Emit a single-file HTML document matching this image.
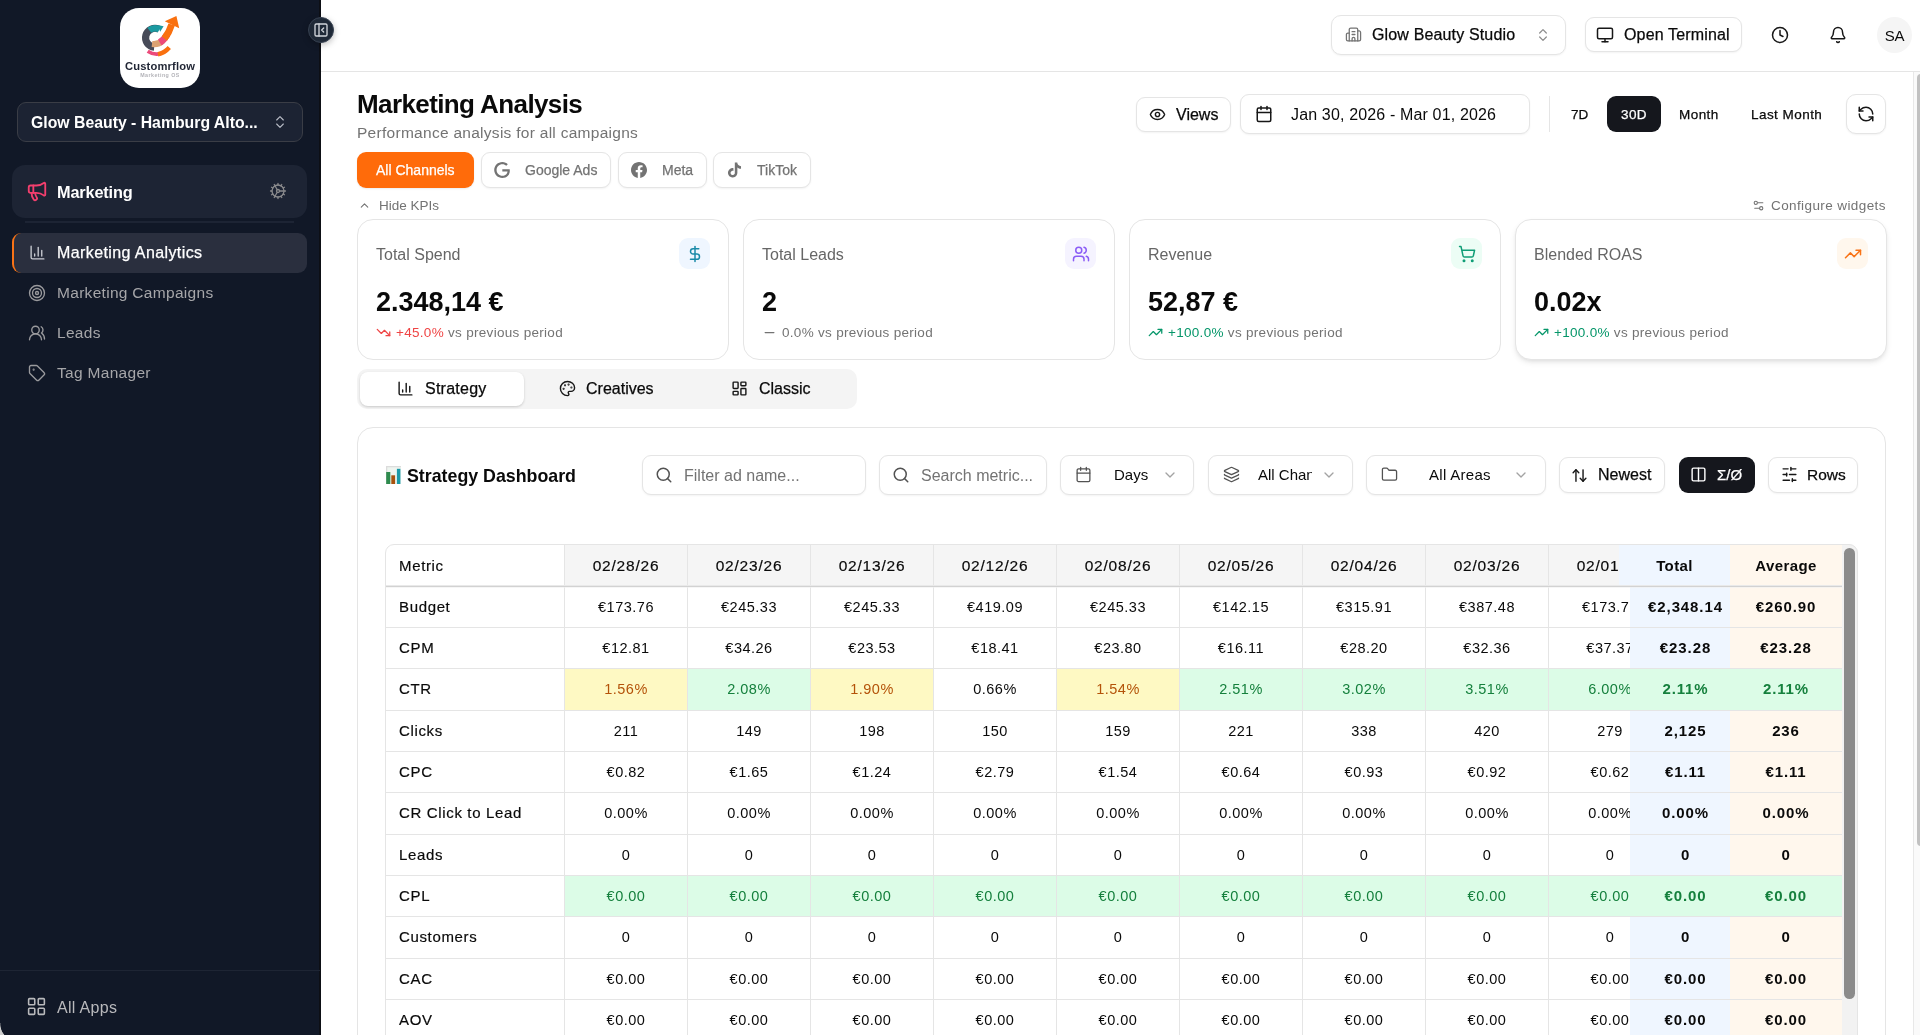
<!DOCTYPE html>
<html lang="en">
<head>
<meta charset="utf-8">
<title>Marketing Analysis</title>
<style>
*{box-sizing:border-box;margin:0;padding:0}
html,body{width:1920px;height:1035px;overflow:hidden;background:#fff}
body{font-family:"Liberation Sans",sans-serif;color:#0a0a0a;position:relative;-webkit-font-smoothing:antialiased;will-change:transform}
.abs{position:absolute}
svg{display:block}
.ic{position:absolute;fill:none;stroke:currentColor;stroke-width:2;stroke-linecap:round;stroke-linejoin:round}
.t{position:absolute;white-space:nowrap;line-height:1}
.md{-webkit-text-stroke:.25px currentColor}

/* ---------- sidebar ---------- */
#sb{position:absolute;left:0;top:0;width:321px;height:1035px;background:#111827;border-right:2px solid #0d0f15}
#logo{position:absolute;left:120px;top:8px;width:80px;height:80px;border-radius:19px;background:#fff;overflow:hidden}
#collapse{position:absolute;left:308px;top:17px;width:26px;height:26px;border-radius:50%;background:#1f2937;border:1px solid #374151;box-shadow:0 2px 6px rgba(0,0,0,.25);color:#d1d5db}
#org{position:absolute;left:17px;top:102px;width:286px;height:40px;border-radius:9px;background:#1c2333;border:1px solid #3a3d46;color:#fff}
#mk{position:absolute;left:12px;top:165px;width:295px;height:53px;border-radius:13px;background:#1d2434}
#sep{position:absolute;left:25px;top:221px;width:269px;height:2px;background:#1d2434}
#act{position:absolute;left:12px;top:233px;width:295px;height:40px;border-radius:9px;background:#2a2f3e;border-left:2px solid #f97316}
.nav{color:#a6a6a9;font-size:15.5px;font-weight:400;letter-spacing:.3px}
#sbfoot{position:absolute;left:0;top:970px;width:320px;height:1px;background:#1e2534}

/* ---------- header ---------- */
#hdr{position:absolute;left:321px;top:0;width:1599px;height:72px;border-bottom:1px solid #e5e5e5;background:#fff}
.btn{position:absolute;border:1px solid #e5e5e5;border-radius:8px;background:#fff;box-shadow:0 1px 2px rgba(0,0,0,.05)}

/* ---------- table ---------- */
#tbl{position:absolute;left:385px;top:544px;width:1473px;height:491px;overflow:hidden;border-top-left-radius:9px;border-top-right-radius:9px;background:#fff;font-size:15px}
#tblborder{position:absolute;left:385px;top:544px;width:1473px;height:500px;border:1px solid #e5e5e5;border-radius:9px;pointer-events:none}
#tbl .hd,#tbl .c{position:absolute;text-align:center;white-space:nowrap;overflow:hidden;line-height:41px;color:#0a0a0a;border-right:1px solid #e5e5e5}
#tbl .hd{background:#f5f5f5;line-height:43px;font-size:15.5px;letter-spacing:.78px;-webkit-text-stroke:.18px currentColor}
#tbl .c{border-bottom:1px solid #e5e5e5;line-height:40px;font-size:14.5px;letter-spacing:.5px}
#tbl .m{text-align:left;padding-left:14px;font-size:15px;letter-spacing:.65px;-webkit-text-stroke:.18px currentColor}
#tbl .y{background:#fef9c3;color:#b45309}
#tbl .g{background:#dcfce7;color:#15803d}
#tbl .s{font-weight:700;border-right:0;font-size:15px;letter-spacing:.9px}
#tbl .hd.s{letter-spacing:.38px;-webkit-text-stroke:0;font-size:15px}
#tbl .tt{background:#eff6ff}
#tbl .av{background:#fff7ed}
#tbl .tt.g,#tbl .av.g{background:#dcfce7}
#hline{position:absolute;left:0;top:41px;width:1457px;height:3px;background:linear-gradient(to bottom,#e9e9e9 0,#e9e9e9 1px,#d2d2d2 1px,#d2d2d2 2px,rgba(240,240,240,.6) 2px)}
#vtrack{position:absolute;left:1457px;top:0;width:16px;height:491px;background:#f2f2f2}
#vthumb{position:absolute;left:1459px;top:4px;width:11px;height:451px;border-radius:5.500px;background:#8b8b8b}
</style>
</head>
<body>

<!-- ================= SIDEBAR ================= -->
<div id="sb">
  <div id="logo">
    <svg class="abs" style="left:0;top:0" width="80" height="62" viewBox="0 0 80 62">
      <path d="M38.970 21.180 A9.400 9.400 0 1 0 34.180 39.060" fill="none" stroke="#474b58" stroke-width="7.200"/>
      <path d="M29.300 22.300 A9.400 9.400 0 0 1 39.400 21.400" fill="none" stroke="#1b9aa1" stroke-width="6.400"/>
      <path d="M37.500 17 L43.600 18.200 L40.200 23.800 Z" fill="#1b9aa1"/>
      <path d="M32 36 C37 36.600 40.500 35 43 32.500" fill="none" stroke="#dba272" stroke-width="6.200"/>
      <path d="M39.800 34.500 C43 32.500 45.500 29.500 47.300 26.500" fill="none" stroke="#ec4a7a" stroke-width="6.800"/>
      <path d="M44.400 30.600 C47.600 26.500 50 22 51.700 16.500" fill="none" stroke="#f9700f" stroke-width="6.800"/>
      <path d="M56.400 8 L44.800 13.300 L59.200 20.300 Z" fill="#f9700f"/>
      <path d="M27.700 43.200 C34 47.300 41 46.800 46.800 41.800" fill="none" stroke="#ec4a7a" stroke-width="3.600"/>
      <path d="M38 46.200 C42 45.600 45.800 43.500 49.300 39.500" fill="none" stroke="#f9700f" stroke-width="4.400"/>
    </svg>
    <div class="t" style="left:0;width:80px;text-align:center;top:53px;font-size:11.2px;font-weight:700;color:#1f2433;letter-spacing:.15px">Customrflow</div>
    <div class="t" style="left:0;width:80px;text-align:center;top:65px;font-size:5.3px;font-weight:700;color:#b3b3b8;letter-spacing:.45px">Marketing OS</div>
  </div>

  <div id="org">
    <div class="t" id="sb_org" style="left:13px;top:12px;font-size:15.8px;font-weight:700">Glow Beauty - Hamburg Alto...</div>
    <svg class="ic" style="left:254px;top:11px;color:#b8bcc6;stroke-width:1.7" width="16" height="16" viewBox="0 0 24 24"><path d="m7 15 5 5 5-5"/><path d="m7 9 5-5 5 5"/></svg>
  </div>

  <div id="mk">
    <svg class="ic" style="left:14px;top:15px;color:#f43f6e;stroke-width:2" width="22" height="22" viewBox="0 0 24 24"><path d="M11 6a13 13 0 0 0 8.400-2.800A1 1 0 0 1 21 4v12a1 1 0 0 1-1.600.800A13 13 0 0 0 11 14H5a2 2 0 0 1-2-2V8a2 2 0 0 1 2-2z"/><path d="M6 14a12 12 0 0 0 2.400 7.200 2 2 0 0 0 3.200-2.400A8 8 0 0 1 10 14"/><path d="M8 6v8"/></svg>
    <div class="t" id="sb_mk" style="left:45px;top:19px;font-size:16.3px;letter-spacing:-.15px;font-weight:700;color:#fff">Marketing</div>
    <svg class="ic" style="left:257px;top:17px;color:#8b8b8d;stroke-width:1.7" width="18" height="18" viewBox="0 0 24 24"><circle cx="12" cy="12" r="8"/><path d="M12 2v2M12 22v-2M17 20.660l-1-1.730M11 10.270 7 3.340M20.660 17l-1.730-1M3.340 7l1.730 1M14 12h8M2 12h2M20.660 7l-1.730 1M3.340 17l1.730-1M17 3.340l-1 1.730M11 13.730l-4 6.930"/><circle cx="12" cy="12" r="2"/></svg>
  </div>
  <div id="sep"></div>

  <div id="act">
    <svg class="ic" style="left:15px;top:11px;color:#c9ccd3;stroke-width:1.9" width="17" height="17" viewBox="0 0 24 24"><path d="M3 3v16a2 2 0 0 0 2 2h16"/><path d="M18 17V9"/><path d="M13 17V5"/><path d="M8 17v-3"/></svg>
    <div class="t md" id="sb_ma" style="left:43px;top:12px;font-size:16px;letter-spacing:.4px;font-weight:400;color:#fff">Marketing Analytics</div>
  </div>

  <svg class="ic" style="left:28px;top:284px;color:#9a9a9d;stroke-width:1.8" width="18" height="18" viewBox="0 0 24 24"><circle cx="12" cy="12" r="10"/><circle cx="12" cy="12" r="6"/><circle cx="12" cy="12" r="2"/></svg>
  <div class="t nav" id="sb_mc" style="left:57px;top:285px">Marketing Campaigns</div>

  <svg class="ic" style="left:28px;top:324px;color:#9a9a9d;stroke-width:1.8" width="18" height="18" viewBox="0 0 24 24"><path d="M18 21a8 8 0 0 0-16 0"/><circle cx="10" cy="8" r="5"/><path d="M22 20c0-3.370-2-6.500-4-8a5 5 0 0 0-.450-8.300"/></svg>
  <div class="t nav" id="sb_l" style="left:57px;top:325px">Leads</div>

  <svg class="ic" style="left:28px;top:364px;color:#9a9a9d;stroke-width:1.8" width="18" height="18" viewBox="0 0 24 24"><path d="M12.586 2.586A2 2 0 0 0 11.172 2H4a2 2 0 0 0-2 2v7.172a2 2 0 0 0 .586 1.414l8.704 8.704a2.426 2.426 0 0 0 3.420 0l6.580-6.580a2.426 2.426 0 0 0 0-3.420z"/><circle cx="7.500" cy="7.500" r=".5" fill="currentColor"/></svg>
  <div class="t nav" id="sb_tm" style="left:57px;top:365px">Tag Manager</div>

  <div id="sbfoot"></div>
  <svg class="ic" style="left:26px;top:996px;color:#b9b9bc;stroke-width:1.8" width="21" height="21" viewBox="0 0 24 24"><rect width="7" height="7" x="3" y="3" rx="1"/><rect width="7" height="7" x="14" y="3" rx="1"/><rect width="7" height="7" x="14" y="14" rx="1"/><rect width="7" height="7" x="3" y="14" rx="1"/></svg>
  <div class="t nav" id="sb_aa" style="left:57px;top:1000px;color:#b9b9bc;font-size:16px">All Apps</div>
</div>

<!-- ================= HEADER ================= -->
<div id="hdr"></div>
<div id="collapse">
  <svg class="ic" style="left:4px;top:4px;stroke-width:2" width="16" height="16" viewBox="0 0 24 24"><rect width="18" height="18" x="3" y="3" rx="2"/><path d="M9 3v18"/><path d="m16 15-3-3 3-3"/></svg>
</div>

<!--MAIN-->
<!-- ================= TOP BAR ================= -->
<div class="btn" style="left:1331px;top:15px;width:235px;height:40px;border-radius:10px"></div>
<svg class="ic" style="left:1345px;top:26px;color:#737373;stroke-width:1.8" width="17" height="17" viewBox="0 0 24 24"><path d="M10 12h4"/><path d="M10 8h4"/><path d="M14 21v-3a2 2 0 0 0-4 0v3"/><path d="M6 10H4a2 2 0 0 0-2 2v7a2 2 0 0 0 2 2h16a2 2 0 0 0 2-2V9a2 2 0 0 0-2-2h-2"/><path d="M6 21V5a2 2 0 0 1 2-2h8a2 2 0 0 1 2 2v16"/></svg>
<div class="t md" id="h_org" style="left:1372px;top:27px;font-size:16px;letter-spacing:.15px;color:#0a0a0a">Glow Beauty Studio</div>
<svg class="ic" style="left:1535px;top:27px;color:#8a8a8a;stroke-width:1.8" width="16" height="16" viewBox="0 0 24 24"><path d="m7 15 5 5 5-5"/><path d="m7 9 5-5 5 5"/></svg>

<div class="btn" style="left:1585px;top:17px;width:157px;height:35px;border-radius:9px"></div>
<svg class="ic" style="left:1596px;top:26px;color:#171717;stroke-width:2" width="18" height="18" viewBox="0 0 24 24"><rect width="20" height="14" x="2" y="3" rx="2"/><path d="M8 21h8"/><path d="M12 17v4"/></svg>
<div class="t md" id="h_term" style="left:1624px;top:27px;font-size:16px;letter-spacing:.15px;color:#0a0a0a">Open Terminal</div>

<svg class="ic" style="left:1771px;top:26px;color:#171717;stroke-width:2" width="18" height="18" viewBox="0 0 24 24"><circle cx="12" cy="12" r="10"/><path d="M12 6v6l4 2"/></svg>
<svg class="ic" style="left:1829px;top:26px;color:#171717;stroke-width:2" width="18" height="18" viewBox="0 0 24 24"><path d="M10.268 21a2 2 0 0 0 3.464 0"/><path d="M3.262 15.326A1 1 0 0 0 4 17h16a1 1 0 0 0 .74-1.673C19.410 13.956 18 12.499 18 8A6 6 0 0 0 6 8c0 4.499-1.411 5.956-2.738 7.326"/></svg>
<div class="abs" style="left:1877px;top:17px;width:35px;height:36px;border-radius:50%;background:#f5f5f5"></div>
<div class="t" id="h_sa" style="left:1877px;width:35px;text-align:center;top:28px;font-size:15px;letter-spacing:-.3px;color:#0a0a0a">SA</div>

<!-- ================= PAGE HEAD ================= -->
<div class="t" id="ttl" style="left:357px;top:91px;font-size:26px;font-weight:700;letter-spacing:-.6px;color:#0a0a0a">Marketing Analysis</div>
<div class="t" id="sub" style="left:357px;top:125px;font-size:15.5px;letter-spacing:.28px;color:#737373">Performance analysis for all campaigns</div>

<div class="abs" style="left:357px;top:152px;width:117px;height:36px;border-radius:9px;background:#ff6b0a;box-shadow:0 1px 2px rgba(0,0,0,.08)"></div>
<div class="t md" id="c_all" style="left:376px;top:163px;font-size:14px;color:#fff">All Channels</div>

<div class="btn" style="left:481px;top:152px;width:130px;height:36px;border-radius:9px"></div>
<svg class="abs" style="left:494px;top:162px" width="16" height="16" viewBox="0 0 24 24"><path fill="#737373" d="M12.48 10.920v3.280h7.840c-.240 1.840-.853 3.187-1.787 4.133-1.147 1.147-2.933 2.400-6.053 2.400-4.827 0-8.600-3.893-8.600-8.720s3.773-8.720 8.600-8.720c2.600 0 4.507 1.027 5.907 2.347l2.307-2.307C18.747 1.440 16.133 0 12.480 0 5.867 0 .307 5.387.307 12s5.560 12 12.173 12c3.573 0 6.267-1.173 8.373-3.360 2.160-2.160 2.840-5.213 2.840-7.667 0-.760-.053-1.467-.173-2.053H12.480z"/></svg>
<div class="t md" id="c_g" style="left:525px;top:163px;font-size:14px;color:#737373">Google Ads</div>

<div class="btn" style="left:618px;top:152px;width:89px;height:36px;border-radius:9px"></div>
<svg class="abs" style="left:631px;top:162px" width="16" height="16" viewBox="0 0 24 24"><path fill="#737373" d="M24 12.073c0-6.627-5.373-12-12-12s-12 5.373-12 12c0 5.990 4.388 10.954 10.125 11.854v-8.385H7.078v-3.470h3.047V9.430c0-3.007 1.792-4.669 4.533-4.669 1.312 0 2.686.235 2.686.235v2.953H15.830c-1.491 0-1.956.925-1.956 1.874v2.250h3.328l-.532 3.470h-2.796v8.385C19.612 23.027 24 18.062 24 12.073z"/></svg>
<div class="t md" id="c_m" style="left:662px;top:163px;font-size:14px;color:#737373">Meta</div>

<div class="btn" style="left:713px;top:152px;width:98px;height:36px;border-radius:9px"></div>
<svg class="abs" style="left:727px;top:162px" width="15" height="16" viewBox="0 0 24 24"><path fill="#737373" d="M12.525.020c1.310-.020 2.610-.010 3.910-.020.080 1.530.630 3.090 1.750 4.170 1.120 1.110 2.700 1.620 4.240 1.790v4.030c-1.440-.050-2.890-.350-4.200-.970-.570-.260-1.100-.590-1.620-.930-.010 2.920.010 5.840-.020 8.750-.080 1.400-.540 2.790-1.350 3.940-1.310 1.920-3.580 3.170-5.910 3.210-1.430.080-2.860-.310-4.080-1.030-2.020-1.190-3.440-3.370-3.650-5.710-.020-.500-.030-1-.010-1.490.180-1.900 1.120-3.720 2.580-4.960 1.660-1.440 3.980-2.130 6.150-1.720.020 1.480-.040 2.960-.040 4.440-.990-.320-2.150-.230-3.020.370-.630.410-1.110 1.040-1.360 1.750-.210.510-.150 1.070-.140 1.610.240 1.640 1.820 3.020 3.500 2.870 1.120-.010 2.190-.660 2.770-1.610.190-.330.400-.670.410-1.060.100-1.790.060-3.570.070-5.360.010-4.030-.010-8.050.020-12.070z"/></svg>
<div class="t md" id="c_t" style="left:757px;top:163px;font-size:14px;color:#737373">TikTok</div>

<div class="btn" style="left:1136px;top:97px;width:95px;height:35px;border-radius:9px"></div>
<svg class="ic" style="left:1149px;top:106px;color:#171717;stroke-width:2" width="17" height="17" viewBox="0 0 24 24"><path d="M2.062 12.348a1 1 0 0 1 0-.696 10.750 10.750 0 0 1 19.876 0 1 1 0 0 1 0 .696 10.750 10.750 0 0 1-19.876 0"/><circle cx="12" cy="12" r="3"/></svg>
<div class="t md" id="b_views" style="left:1176px;top:107px;font-size:16px;color:#0a0a0a">Views</div>

<div class="btn" style="left:1240px;top:94px;width:290px;height:40px;border-radius:9px"></div>
<svg class="ic" style="left:1255px;top:105px;color:#171717;stroke-width:2" width="18" height="18" viewBox="0 0 24 24"><path d="M8 2v4"/><path d="M16 2v4"/><rect width="18" height="18" x="3" y="4" rx="2"/><path d="M3 10h18"/></svg>
<div class="t" id="b_date" style="left:1291px;top:107px;font-size:16px;letter-spacing:.15px;color:#0a0a0a">Jan 30, 2026 - Mar 01, 2026</div>

<div class="abs" style="left:1549px;top:96px;width:1px;height:36px;background:#e5e5e5"></div>
<div class="t md" id="r_7d" style="left:1571px;top:108px;font-size:13.5px;color:#0a0a0a">7D</div>
<div class="abs" style="left:1607px;top:96px;width:54px;height:36px;border-radius:9px;background:#15171d"></div>
<div class="t md" id="r_30d" style="left:1607px;width:54px;text-align:center;top:108px;font-size:13.5px;letter-spacing:.45px;color:#fff">30D</div>
<div class="t md" id="r_m" style="left:1679px;top:108px;font-size:13.5px;letter-spacing:.45px;color:#0a0a0a">Month</div>
<div class="t md" id="r_lm" style="left:1751px;top:108px;font-size:13.5px;letter-spacing:.45px;color:#0a0a0a">Last Month</div>
<div class="btn" style="left:1846px;top:94px;width:40px;height:40px;border-radius:10px"></div>
<svg class="ic" style="left:1857px;top:105px;color:#171717;stroke-width:2" width="18" height="18" viewBox="0 0 24 24"><path d="M21 12a9 9 0 0 0-9-9 9.750 9.750 0 0 0-6.740 2.740L3 8"/><path d="M3 3v5h5"/><path d="M3 12a9 9 0 0 0 9 9 9.750 9.750 0 0 0 6.740-2.740L21 16"/><path d="M16 16h5v5"/></svg>

<svg class="ic" style="left:358px;top:199px;color:#737373;stroke-width:2" width="13" height="13" viewBox="0 0 24 24"><path d="m18 15-6-6-6 6"/></svg>
<div class="t" id="hk" style="left:379px;top:199px;font-size:13.5px;color:#737373">Hide KPIs</div>
<svg class="ic" style="left:1752px;top:199px;color:#737373;stroke-width:2" width="13" height="13" viewBox="0 0 24 24"><path d="M20 7h-9"/><path d="M14 17H5"/><circle cx="17" cy="17" r="3"/><circle cx="7" cy="7" r="3"/></svg>
<div class="t" id="cw" style="left:1771px;top:199px;font-size:13.5px;letter-spacing:.4px;color:#737373">Configure widgets</div>

<!-- ================= KPI CARDS ================= -->
<div class="abs" style="left:357px;top:219px;width:372px;height:141px;border:1px solid #e5e5e5;border-radius:16px;background:#fff;"></div>
<div class="t" id="k0l" style="left:376px;top:247px;font-size:16px;color:#666">Total Spend</div>
<div class="abs" style="left:679px;top:238px;width:31px;height:31px;border-radius:9px;background:#eff6ff"></div>
<svg class="ic" style="left:686px;top:245px;stroke-width:2" width="18" height="18" viewBox="0 0 24 24"><defs><linearGradient id="gd" x1="0" y1="0" x2="0" y2="1"><stop offset="0" stop-color="#2563eb"/><stop offset="1" stop-color="#0d9488"/></linearGradient></defs><g stroke="#1a8aa8"><line x1="12" x2="12" y1="2" y2="22"/><path d="M17 5H9.500a3.500 3.500 0 0 0 0 7h5a3.500 3.500 0 0 1 0 7H6"/></g></svg>
<div class="t" id="k0v" style="left:376px;top:289px;font-size:27px;font-weight:700;color:#0a0a0a">2.348,14 €</div>
<svg class="ic" style="left:376px;top:325px;color:#ef4444;stroke-width:2" width="15" height="15" viewBox="0 0 24 24"><path d="M16 17h6v-6"/><path d="m22 17-8.500-8.500-5 5L2 7"/></svg>
<div class="t" id="k0p" style="left:396px;top:326px;font-size:13.5px;letter-spacing:.3px;color:#737373"><span style="color:#ef4444">+45.0%</span> vs previous period</div>
<div class="abs" style="left:743px;top:219px;width:372px;height:141px;border:1px solid #e5e5e5;border-radius:16px;background:#fff;"></div>
<div class="t" id="k1l" style="left:762px;top:247px;font-size:16px;color:#666">Total Leads</div>
<div class="abs" style="left:1065px;top:238px;width:31px;height:31px;border-radius:9px;background:#f5f3ff"></div>
<svg class="ic" style="left:1072px;top:245px;color:#8b5cf6;stroke-width:2" width="18" height="18" viewBox="0 0 24 24"><path d="M16 21v-2a4 4 0 0 0-4-4H6a4 4 0 0 0-4 4v2"/><circle cx="9" cy="7" r="4"/><path d="M22 21v-2a4 4 0 0 0-3-3.870"/><path d="M16 3.130a4 4 0 0 1 0 7.750"/></svg>
<div class="t" id="k1v" style="left:762px;top:289px;font-size:27px;font-weight:700;color:#0a0a0a">2</div>
<svg class="ic" style="left:762px;top:325px;color:#737373;stroke-width:2" width="15" height="15" viewBox="0 0 24 24"><path d="M5 12h14"/></svg>
<div class="t" id="k1p" style="left:782px;top:326px;font-size:13.5px;letter-spacing:.3px;color:#737373"><span style="color:#737373">0.0%</span> vs previous period</div>
<div class="abs" style="left:1129px;top:219px;width:372px;height:141px;border:1px solid #e5e5e5;border-radius:16px;background:#fff;"></div>
<div class="t" id="k2l" style="left:1148px;top:247px;font-size:16px;color:#666">Revenue</div>
<div class="abs" style="left:1451px;top:238px;width:31px;height:31px;border-radius:9px;background:#ecfdf5"></div>
<svg class="ic" style="left:1458px;top:245px;color:#0f9d76;stroke-width:2" width="18" height="18" viewBox="0 0 24 24"><circle cx="8" cy="21" r="1"/><circle cx="19" cy="21" r="1"/><path d="M2.050 2.050h2l2.660 12.420a2 2 0 0 0 2 1.580h9.780a2 2 0 0 0 1.950-1.570l1.650-7.430H5.120"/></svg>
<div class="t" id="k2v" style="left:1148px;top:289px;font-size:27px;font-weight:700;color:#0a0a0a">52,87 €</div>
<svg class="ic" style="left:1148px;top:325px;color:#059669;stroke-width:2" width="15" height="15" viewBox="0 0 24 24"><path d="M16 7h6v6"/><path d="m22 7-8.500 8.500-5-5L2 17"/></svg>
<div class="t" id="k2p" style="left:1168px;top:326px;font-size:13.5px;letter-spacing:.3px;color:#737373"><span style="color:#059669">+100.0%</span> vs previous period</div>
<div class="abs" style="left:1515px;top:219px;width:372px;height:141px;border:1px solid #e5e5e5;border-radius:16px;background:#fff;box-shadow:0 3px 6px -1px rgba(0,0,0,.10),0 2px 4px -2px rgba(0,0,0,.08);"></div>
<div class="t" id="k3l" style="left:1534px;top:247px;font-size:16px;color:#666">Blended ROAS</div>
<div class="abs" style="left:1837px;top:238px;width:31px;height:31px;border-radius:9px;background:#fff7ed"></div>
<svg class="ic" style="left:1844px;top:245px;color:#f97316;stroke-width:2" width="18" height="18" viewBox="0 0 24 24"><path d="M16 7h6v6"/><path d="m22 7-8.500 8.500-5-5L2 17"/></svg>
<div class="t" id="k3v" style="left:1534px;top:289px;font-size:27px;font-weight:700;color:#0a0a0a">0.02x</div>
<svg class="ic" style="left:1534px;top:325px;color:#059669;stroke-width:2" width="15" height="15" viewBox="0 0 24 24"><path d="M16 7h6v6"/><path d="m22 7-8.500 8.500-5-5L2 17"/></svg>
<div class="t" id="k3p" style="left:1554px;top:326px;font-size:13.5px;letter-spacing:.3px;color:#737373"><span style="color:#059669">+100.0%</span> vs previous period</div>
<!-- ================= TABS ================= -->
<div class="abs" style="left:357px;top:369px;width:500px;height:40px;border-radius:10px;background:#f4f4f4"></div>
<div class="abs" style="left:360px;top:372px;width:164px;height:34px;border-radius:8px;background:#fff;box-shadow:0 1px 3px rgba(0,0,0,.12),0 1px 2px rgba(0,0,0,.06)"></div>
<svg class="ic" style="left:397px;top:380px;color:#171717;stroke-width:2" width="17" height="17" viewBox="0 0 24 24"><path d="M3 3v16a2 2 0 0 0 2 2h16"/><path d="M18 17V9"/><path d="M13 17V5"/><path d="M8 17v-3"/></svg>
<div class="t md" id="tb1" style="left:425px;top:381px;font-size:16px;letter-spacing:.25px;color:#0a0a0a">Strategy</div>
<svg class="ic" style="left:559px;top:380px;color:#171717;stroke-width:2" width="17" height="17" viewBox="0 0 24 24"><path d="M12 22a1 1 0 0 1 0-20 10 9 0 0 1 10 9 5 5 0 0 1-5 5h-2.250a1.750 1.750 0 0 0-1.400 2.800l.300.400a1.750 1.750 0 0 1-1.400 2.800z"/><circle cx="13.500" cy="6.500" r=".5" fill="currentColor"/><circle cx="17.500" cy="10.500" r=".5" fill="currentColor"/><circle cx="6.500" cy="12.500" r=".5" fill="currentColor"/><circle cx="8.500" cy="7.500" r=".5" fill="currentColor"/></svg>
<div class="t md" id="tb2" style="left:586px;top:381px;font-size:16px;color:#0a0a0a">Creatives</div>
<svg class="ic" style="left:731px;top:380px;color:#171717;stroke-width:2" width="17" height="17" viewBox="0 0 24 24"><rect width="7" height="9" x="3" y="3" rx="1"/><rect width="7" height="5" x="14" y="3" rx="1"/><rect width="7" height="9" x="14" y="12" rx="1"/><rect width="7" height="5" x="3" y="16" rx="1"/></svg>
<div class="t md" id="tb3" style="left:759px;top:381px;font-size:16px;color:#0a0a0a">Classic</div>

<!-- ================= DASHBOARD ================= -->
<div class="abs" style="left:357px;top:427px;width:1529px;height:640px;border:1px solid #e5e5e5;border-radius:16px;background:#fff"></div>
<svg class="abs" style="left:386px;top:466px" width="15" height="18" viewBox="0 0 15 18"><rect x="0" y="0" width="15" height="18" fill="#eef5f0"/><rect x="0" y="0" width="15" height="1.300" fill="#dcdcdc"/><rect x="0" y="0" width="1.300" height="18" fill="#dcdcdc"/><rect x="0.200" y="6" width="4.100" height="12" fill="#2e8b4e"/><rect x="5.300" y="9.300" width="3.800" height="8.700" fill="#a8520e"/><rect x="10.900" y="2.800" width="3.500" height="15.200" fill="#1a9aa8"/></svg>
<div class="t" id="sd" style="left:407px;top:468px;font-size:17.8px;font-weight:700;color:#0a0a0a">Strategy Dashboard</div>

<div class="btn" style="left:642px;top:455px;width:224px;height:40px;border-radius:9px"></div>
<svg class="ic" style="left:655px;top:466px;color:#525252;stroke-width:2" width="18" height="18" viewBox="0 0 24 24"><path d="m21 21-4.340-4.340"/><circle cx="11" cy="11" r="8"/></svg>
<div class="t" id="f1" style="left:684px;top:468px;font-size:16px;color:#737373">Filter ad name...</div>

<div class="btn" style="left:879px;top:455px;width:168px;height:40px;border-radius:9px"></div>
<svg class="ic" style="left:892px;top:466px;color:#525252;stroke-width:2" width="18" height="18" viewBox="0 0 24 24"><path d="m21 21-4.340-4.340"/><circle cx="11" cy="11" r="8"/></svg>
<div class="t" id="f2" style="left:921px;top:468px;font-size:16px;color:#737373">Search metric...</div>

<div class="btn" style="left:1060px;top:455px;width:134px;height:40px;border-radius:9px"></div>
<svg class="ic" style="left:1075px;top:466px;color:#525252;stroke-width:1.8" width="17" height="17" viewBox="0 0 24 24"><path d="M8 2v4"/><path d="M16 2v4"/><rect width="18" height="18" x="3" y="4" rx="2"/><path d="M3 10h18"/></svg>
<div class="t" id="s1" style="left:1114px;top:467px;font-size:15px;color:#0a0a0a">Days</div>
<svg class="ic" style="left:1162px;top:467px;color:#a3a3a3;stroke-width:2" width="16" height="16" viewBox="0 0 24 24"><path d="m6 9 6 6 6-6"/></svg>

<div class="btn" style="left:1208px;top:455px;width:145px;height:40px;border-radius:9px"></div>
<svg class="ic" style="left:1223px;top:466px;color:#525252;stroke-width:1.8" width="17" height="17" viewBox="0 0 24 24"><path d="M12.830 2.180a2 2 0 0 0-1.660 0L2.600 6.080a1 1 0 0 0 0 1.830l8.580 3.910a2 2 0 0 0 1.660 0l8.580-3.900a1 1 0 0 0 0-1.830z"/><path d="M2 12a1 1 0 0 0 .580.910l8.600 3.910a2 2 0 0 0 1.650 0l8.580-3.900A1 1 0 0 0 22 12"/><path d="M2 17a1 1 0 0 0 .580.910l8.600 3.910a2 2 0 0 0 1.650 0l8.580-3.900A1 1 0 0 0 22 17"/></svg>
<div class="t" id="s2" style="left:1258px;top:467px;font-size:15px;color:#0a0a0a;width:54px;height:17px;overflow:hidden">All Channels</div>
<svg class="ic" style="left:1321px;top:467px;color:#a3a3a3;stroke-width:2" width="16" height="16" viewBox="0 0 24 24"><path d="m6 9 6 6 6-6"/></svg>

<div class="btn" style="left:1366px;top:455px;width:180px;height:40px;border-radius:9px"></div>
<svg class="ic" style="left:1381px;top:466px;color:#525252;stroke-width:1.8" width="17" height="17" viewBox="0 0 24 24"><path d="M20 20a2 2 0 0 0 2-2V8a2 2 0 0 0-2-2h-7.900a2 2 0 0 1-1.690-.900L9.600 3.900A2 2 0 0 0 7.930 3H4a2 2 0 0 0-2 2v13a2 2 0 0 0 2 2Z"/></svg>
<div class="t" id="s3" style="left:1429px;top:467px;font-size:15px;letter-spacing:.3px;color:#0a0a0a">All Areas</div>
<svg class="ic" style="left:1513px;top:467px;color:#a3a3a3;stroke-width:2" width="16" height="16" viewBox="0 0 24 24"><path d="m6 9 6 6 6-6"/></svg>

<div class="btn" style="left:1559px;top:457px;width:106px;height:36px;border-radius:9px"></div>
<svg class="ic" style="left:1571px;top:467px;color:#171717;stroke-width:2" width="17" height="17" viewBox="0 0 24 24"><path d="m21 16-4 4-4-4"/><path d="M17 20V4"/><path d="m3 8 4-4 4 4"/><path d="M7 4v16"/></svg>
<div class="t md" id="b1" style="left:1598px;top:467px;font-size:16px;color:#0a0a0a">Newest</div>

<div class="abs" style="left:1679px;top:457px;width:76px;height:36px;border-radius:9px;background:#15171d"></div>
<svg class="ic" style="left:1690px;top:466px;color:#fff;stroke-width:2" width="17" height="17" viewBox="0 0 24 24"><rect width="18" height="18" x="3" y="3" rx="2"/><path d="M12 3v18"/></svg>
<div class="t md" id="b2" style="left:1717px;top:467px;font-size:15px;color:#fff">Σ/Ø</div>

<div class="btn" style="left:1768px;top:457px;width:90px;height:36px;border-radius:9px"></div>
<svg class="ic" style="left:1781px;top:466px;color:#171717;stroke-width:2" width="17" height="17" viewBox="0 0 24 24"><path d="M21 4h-7"/><path d="M10 4H3"/><path d="M21 12h-9"/><path d="M8 12H3"/><path d="M21 20h-5"/><path d="M12 20H3"/><path d="M14 2v4"/><path d="M8 10v4"/><path d="M16 18v4"/></svg>
<div class="t md" id="b3" style="left:1807px;top:467px;font-size:15.5px;color:#0a0a0a">Rows</div>

<!-- ================= TABLE ================= -->
<div id="tbl">
<div class="hd" style="left:0;top:0;width:180px;height:43px;background:#fff;text-align:left;padding-left:14px;letter-spacing:.65px;font-size:15px">Metric</div>
<div class="hd" style="left:180px;top:0;width:123px;height:43px">02/28/26</div>
<div class="hd" style="left:303px;top:0;width:123px;height:43px">02/23/26</div>
<div class="hd" style="left:426px;top:0;width:123px;height:43px">02/13/26</div>
<div class="hd" style="left:549px;top:0;width:123px;height:43px">02/12/26</div>
<div class="hd" style="left:672px;top:0;width:123px;height:43px">02/08/26</div>
<div class="hd" style="left:795px;top:0;width:123px;height:43px">02/05/26</div>
<div class="hd" style="left:918px;top:0;width:123px;height:43px">02/04/26</div>
<div class="hd" style="left:1041px;top:0;width:123px;height:43px">02/03/26</div>
<div class="hd" style="left:1164px;top:0;width:123px;height:43px">02/01/26</div>
<div class="c m" style="left:0;top:43px;width:180px;height:41px">Budget</div>
<div class="c" style="left:180px;top:43px;width:123px;height:41px">€173.76</div>
<div class="c" style="left:303px;top:43px;width:123px;height:41px">€245.33</div>
<div class="c" style="left:426px;top:43px;width:123px;height:41px">€245.33</div>
<div class="c" style="left:549px;top:43px;width:123px;height:41px">€419.09</div>
<div class="c" style="left:672px;top:43px;width:123px;height:41px">€245.33</div>
<div class="c" style="left:795px;top:43px;width:123px;height:41px">€142.15</div>
<div class="c" style="left:918px;top:43px;width:123px;height:41px">€315.91</div>
<div class="c" style="left:1041px;top:43px;width:123px;height:41px">€387.48</div>
<div class="c" style="left:1164px;top:43px;width:123px;height:41px">€173.76</div>
<div class="c s tt" style="left:1245px;top:43px;width:100px;height:41px;padding-left:11px">€2,348.14</div>
<div class="c s av" style="left:1345px;top:43px;width:112px;height:41px">€260.90</div>
<div class="c m" style="left:0;top:84px;width:180px;height:41px">CPM</div>
<div class="c" style="left:180px;top:84px;width:123px;height:41px">€12.81</div>
<div class="c" style="left:303px;top:84px;width:123px;height:41px">€34.26</div>
<div class="c" style="left:426px;top:84px;width:123px;height:41px">€23.53</div>
<div class="c" style="left:549px;top:84px;width:123px;height:41px">€18.41</div>
<div class="c" style="left:672px;top:84px;width:123px;height:41px">€23.80</div>
<div class="c" style="left:795px;top:84px;width:123px;height:41px">€16.11</div>
<div class="c" style="left:918px;top:84px;width:123px;height:41px">€28.20</div>
<div class="c" style="left:1041px;top:84px;width:123px;height:41px">€32.36</div>
<div class="c" style="left:1164px;top:84px;width:123px;height:41px">€37.37</div>
<div class="c s tt" style="left:1245px;top:84px;width:100px;height:41px;padding-left:11px">€23.28</div>
<div class="c s av" style="left:1345px;top:84px;width:112px;height:41px">€23.28</div>
<div class="c m" style="left:0;top:125px;width:180px;height:42px">CTR</div>
<div class="c y" style="left:180px;top:125px;width:123px;height:42px">1.56%</div>
<div class="c g" style="left:303px;top:125px;width:123px;height:42px">2.08%</div>
<div class="c y" style="left:426px;top:125px;width:123px;height:42px">1.90%</div>
<div class="c" style="left:549px;top:125px;width:123px;height:42px">0.66%</div>
<div class="c y" style="left:672px;top:125px;width:123px;height:42px">1.54%</div>
<div class="c g" style="left:795px;top:125px;width:123px;height:42px">2.51%</div>
<div class="c g" style="left:918px;top:125px;width:123px;height:42px">3.02%</div>
<div class="c g" style="left:1041px;top:125px;width:123px;height:42px">3.51%</div>
<div class="c g" style="left:1164px;top:125px;width:123px;height:42px">6.00%</div>
<div class="c s tt g" style="left:1245px;top:125px;width:100px;height:42px;padding-left:11px">2.11%</div>
<div class="c s av g" style="left:1345px;top:125px;width:112px;height:42px">2.11%</div>
<div class="c m" style="left:0;top:167px;width:180px;height:41px">Clicks</div>
<div class="c" style="left:180px;top:167px;width:123px;height:41px">211</div>
<div class="c" style="left:303px;top:167px;width:123px;height:41px">149</div>
<div class="c" style="left:426px;top:167px;width:123px;height:41px">198</div>
<div class="c" style="left:549px;top:167px;width:123px;height:41px">150</div>
<div class="c" style="left:672px;top:167px;width:123px;height:41px">159</div>
<div class="c" style="left:795px;top:167px;width:123px;height:41px">221</div>
<div class="c" style="left:918px;top:167px;width:123px;height:41px">338</div>
<div class="c" style="left:1041px;top:167px;width:123px;height:41px">420</div>
<div class="c" style="left:1164px;top:167px;width:123px;height:41px">279</div>
<div class="c s tt" style="left:1245px;top:167px;width:100px;height:41px;padding-left:11px">2,125</div>
<div class="c s av" style="left:1345px;top:167px;width:112px;height:41px">236</div>
<div class="c m" style="left:0;top:208px;width:180px;height:41px">CPC</div>
<div class="c" style="left:180px;top:208px;width:123px;height:41px">€0.82</div>
<div class="c" style="left:303px;top:208px;width:123px;height:41px">€1.65</div>
<div class="c" style="left:426px;top:208px;width:123px;height:41px">€1.24</div>
<div class="c" style="left:549px;top:208px;width:123px;height:41px">€2.79</div>
<div class="c" style="left:672px;top:208px;width:123px;height:41px">€1.54</div>
<div class="c" style="left:795px;top:208px;width:123px;height:41px">€0.64</div>
<div class="c" style="left:918px;top:208px;width:123px;height:41px">€0.93</div>
<div class="c" style="left:1041px;top:208px;width:123px;height:41px">€0.92</div>
<div class="c" style="left:1164px;top:208px;width:123px;height:41px">€0.62</div>
<div class="c s tt" style="left:1245px;top:208px;width:100px;height:41px;padding-left:11px">€1.11</div>
<div class="c s av" style="left:1345px;top:208px;width:112px;height:41px">€1.11</div>
<div class="c m" style="left:0;top:249px;width:180px;height:42px">CR Click to Lead</div>
<div class="c" style="left:180px;top:249px;width:123px;height:42px">0.00%</div>
<div class="c" style="left:303px;top:249px;width:123px;height:42px">0.00%</div>
<div class="c" style="left:426px;top:249px;width:123px;height:42px">0.00%</div>
<div class="c" style="left:549px;top:249px;width:123px;height:42px">0.00%</div>
<div class="c" style="left:672px;top:249px;width:123px;height:42px">0.00%</div>
<div class="c" style="left:795px;top:249px;width:123px;height:42px">0.00%</div>
<div class="c" style="left:918px;top:249px;width:123px;height:42px">0.00%</div>
<div class="c" style="left:1041px;top:249px;width:123px;height:42px">0.00%</div>
<div class="c" style="left:1164px;top:249px;width:123px;height:42px">0.00%</div>
<div class="c s tt" style="left:1245px;top:249px;width:100px;height:42px;padding-left:11px">0.00%</div>
<div class="c s av" style="left:1345px;top:249px;width:112px;height:42px">0.00%</div>
<div class="c m" style="left:0;top:291px;width:180px;height:41px">Leads</div>
<div class="c" style="left:180px;top:291px;width:123px;height:41px">0</div>
<div class="c" style="left:303px;top:291px;width:123px;height:41px">0</div>
<div class="c" style="left:426px;top:291px;width:123px;height:41px">0</div>
<div class="c" style="left:549px;top:291px;width:123px;height:41px">0</div>
<div class="c" style="left:672px;top:291px;width:123px;height:41px">0</div>
<div class="c" style="left:795px;top:291px;width:123px;height:41px">0</div>
<div class="c" style="left:918px;top:291px;width:123px;height:41px">0</div>
<div class="c" style="left:1041px;top:291px;width:123px;height:41px">0</div>
<div class="c" style="left:1164px;top:291px;width:123px;height:41px">0</div>
<div class="c s tt" style="left:1245px;top:291px;width:100px;height:41px;padding-left:11px">0</div>
<div class="c s av" style="left:1345px;top:291px;width:112px;height:41px">0</div>
<div class="c m" style="left:0;top:332px;width:180px;height:41px">CPL</div>
<div class="c g" style="left:180px;top:332px;width:123px;height:41px">€0.00</div>
<div class="c g" style="left:303px;top:332px;width:123px;height:41px">€0.00</div>
<div class="c g" style="left:426px;top:332px;width:123px;height:41px">€0.00</div>
<div class="c g" style="left:549px;top:332px;width:123px;height:41px">€0.00</div>
<div class="c g" style="left:672px;top:332px;width:123px;height:41px">€0.00</div>
<div class="c g" style="left:795px;top:332px;width:123px;height:41px">€0.00</div>
<div class="c g" style="left:918px;top:332px;width:123px;height:41px">€0.00</div>
<div class="c g" style="left:1041px;top:332px;width:123px;height:41px">€0.00</div>
<div class="c g" style="left:1164px;top:332px;width:123px;height:41px">€0.00</div>
<div class="c s tt g" style="left:1245px;top:332px;width:100px;height:41px;padding-left:11px">€0.00</div>
<div class="c s av g" style="left:1345px;top:332px;width:112px;height:41px">€0.00</div>
<div class="c m" style="left:0;top:373px;width:180px;height:42px">Customers</div>
<div class="c" style="left:180px;top:373px;width:123px;height:42px">0</div>
<div class="c" style="left:303px;top:373px;width:123px;height:42px">0</div>
<div class="c" style="left:426px;top:373px;width:123px;height:42px">0</div>
<div class="c" style="left:549px;top:373px;width:123px;height:42px">0</div>
<div class="c" style="left:672px;top:373px;width:123px;height:42px">0</div>
<div class="c" style="left:795px;top:373px;width:123px;height:42px">0</div>
<div class="c" style="left:918px;top:373px;width:123px;height:42px">0</div>
<div class="c" style="left:1041px;top:373px;width:123px;height:42px">0</div>
<div class="c" style="left:1164px;top:373px;width:123px;height:42px">0</div>
<div class="c s tt" style="left:1245px;top:373px;width:100px;height:42px;padding-left:11px">0</div>
<div class="c s av" style="left:1345px;top:373px;width:112px;height:42px">0</div>
<div class="c m" style="left:0;top:415px;width:180px;height:41px">CAC</div>
<div class="c" style="left:180px;top:415px;width:123px;height:41px">€0.00</div>
<div class="c" style="left:303px;top:415px;width:123px;height:41px">€0.00</div>
<div class="c" style="left:426px;top:415px;width:123px;height:41px">€0.00</div>
<div class="c" style="left:549px;top:415px;width:123px;height:41px">€0.00</div>
<div class="c" style="left:672px;top:415px;width:123px;height:41px">€0.00</div>
<div class="c" style="left:795px;top:415px;width:123px;height:41px">€0.00</div>
<div class="c" style="left:918px;top:415px;width:123px;height:41px">€0.00</div>
<div class="c" style="left:1041px;top:415px;width:123px;height:41px">€0.00</div>
<div class="c" style="left:1164px;top:415px;width:123px;height:41px">€0.00</div>
<div class="c s tt" style="left:1245px;top:415px;width:100px;height:41px;padding-left:11px">€0.00</div>
<div class="c s av" style="left:1345px;top:415px;width:112px;height:41px">€0.00</div>
<div class="c m" style="left:0;top:456px;width:180px;height:41px">AOV</div>
<div class="c" style="left:180px;top:456px;width:123px;height:41px">€0.00</div>
<div class="c" style="left:303px;top:456px;width:123px;height:41px">€0.00</div>
<div class="c" style="left:426px;top:456px;width:123px;height:41px">€0.00</div>
<div class="c" style="left:549px;top:456px;width:123px;height:41px">€0.00</div>
<div class="c" style="left:672px;top:456px;width:123px;height:41px">€0.00</div>
<div class="c" style="left:795px;top:456px;width:123px;height:41px">€0.00</div>
<div class="c" style="left:918px;top:456px;width:123px;height:41px">€0.00</div>
<div class="c" style="left:1041px;top:456px;width:123px;height:41px">€0.00</div>
<div class="c" style="left:1164px;top:456px;width:123px;height:41px">€0.00</div>
<div class="c s tt" style="left:1245px;top:456px;width:100px;height:41px;padding-left:11px">€0.00</div>
<div class="c s av" style="left:1345px;top:456px;width:112px;height:41px">€0.00</div>
<div class="hd s tt" style="left:1234px;top:0;width:111px;height:43px;border-right:0">Total</div>
<div class="hd s av" style="left:1345px;top:0;width:112px;height:43px;border-right:0">Average</div>
<div id="hline"></div>
<div id="vtrack"></div><div id="vthumb"></div>
</div>
<div id="tblborder"></div>
<div class="abs" style="left:1913px;top:72px;width:7px;height:963px;background:#fafafa;border-left:1px solid #e8e8e8"></div>
<div class="abs" style="left:1917px;top:74px;width:8px;height:772px;border-radius:4px;background:#c1c1c1"></div>
<div class="abs" style="left:0;top:1023px;width:17px;height:12px;background:radial-gradient(circle at 17px 1px,rgba(0,0,0,0) 16.300px,#cfcfcf 17px)"></div>

<!--/MAIN-->

</body>
</html>
